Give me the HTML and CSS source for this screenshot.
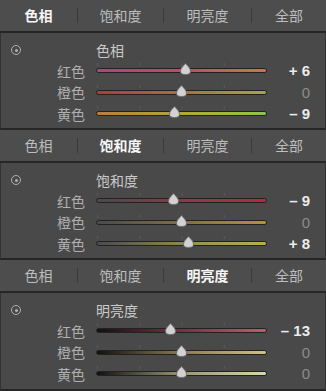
FILE: index.html
```html
<!DOCTYPE html>
<html lang="zh-CN">

<head>
    <meta charset="UTF-8">
    <meta name="viewport" content="width=device-width, initial-scale=1.0">
    <title>HSL</title>
    <link rel="stylesheet" href="styles.css">
</head>

<body>

    <!-- 色相 -->
    <div class="section">
        <div class="tabs">
            <span class="tab active">色相</span><i class="sep"></i>
            <span class="tab">饱和度</span><i class="sep"></i>
            <span class="tab">明亮度</span><i class="sep"></i>
            <span class="tab">全部</span>
        </div>
        <div class="panel">
            <div class="row head">
                <span class="dot"></span>
                <span class="title">色相</span>
            </div>
            <div class="row">
                <span class="label">红色</span>
                <div class="track hue-red"><span class="ticks"></span><svg class="thumb" style="left: 52.6%" width="11" height="12" viewBox="0 0 11 12"><path d="M5.5 0.5 C7 2.5 10.5 5 10.5 8 C10.5 10.5 9 11.5 5.5 11.5 C2 11.5 0.5 10.5 0.5 8 C0.5 5 4 2.5 5.5 0.5 Z" /></svg></div>
                <span class="value">+ 6</span>
            </div>
            <div class="row">
                <span class="label">橙色</span>
                <div class="track hue-orange"><span class="ticks"></span><svg class="thumb" style="left: 50%" width="11" height="12" viewBox="0 0 11 12"><path d="M5.5 0.5 C7 2.5 10.5 5 10.5 8 C10.5 10.5 9 11.5 5.5 11.5 C2 11.5 0.5 10.5 0.5 8 C0.5 5 4 2.5 5.5 0.5 Z" /></svg></div>
                <span class="value zero">0</span>
            </div>
            <div class="row">
                <span class="label">黄色</span>
                <div class="track hue-yellow"><span class="ticks"></span><svg class="thumb" style="left: 45.6%" width="11" height="12" viewBox="0 0 11 12"><path d="M5.5 0.5 C7 2.5 10.5 5 10.5 8 C10.5 10.5 9 11.5 5.5 11.5 C2 11.5 0.5 10.5 0.5 8 C0.5 5 4 2.5 5.5 0.5 Z" /></svg></div>
                <span class="value">– 9</span>
            </div>
        </div>
    </div>

    <!-- 饱和度 -->
    <div class="section">
        <div class="tabs">
            <span class="tab">色相</span><i class="sep"></i>
            <span class="tab active">饱和度</span><i class="sep"></i>
            <span class="tab">明亮度</span><i class="sep"></i>
            <span class="tab">全部</span>
        </div>
        <div class="panel">
            <div class="row head">
                <span class="dot"></span>
                <span class="title">饱和度</span>
            </div>
            <div class="row">
                <span class="label">红色</span>
                <div class="track sat-red"><span class="ticks"></span><svg class="thumb" style="left: 45%" width="11" height="12" viewBox="0 0 11 12"><path d="M5.5 0.5 C7 2.5 10.5 5 10.5 8 C10.5 10.5 9 11.5 5.5 11.5 C2 11.5 0.5 10.5 0.5 8 C0.5 5 4 2.5 5.5 0.5 Z" /></svg></div>
                <span class="value">– 9</span>
            </div>
            <div class="row">
                <span class="label">橙色</span>
                <div class="track sat-orange"><span class="ticks"></span><svg class="thumb" style="left: 50%" width="11" height="12" viewBox="0 0 11 12"><path d="M5.5 0.5 C7 2.5 10.5 5 10.5 8 C10.5 10.5 9 11.5 5.5 11.5 C2 11.5 0.5 10.5 0.5 8 C0.5 5 4 2.5 5.5 0.5 Z" /></svg></div>
                <span class="value zero">0</span>
            </div>
            <div class="row">
                <span class="label">黄色</span>
                <div class="track sat-yellow"><span class="ticks"></span><svg class="thumb" style="left: 54%" width="11" height="12" viewBox="0 0 11 12"><path d="M5.5 0.5 C7 2.5 10.5 5 10.5 8 C10.5 10.5 9 11.5 5.5 11.5 C2 11.5 0.5 10.5 0.5 8 C0.5 5 4 2.5 5.5 0.5 Z" /></svg></div>
                <span class="value">+ 8</span>
            </div>
        </div>
    </div>

    <!-- 明亮度 -->
    <div class="section">
        <div class="tabs">
            <span class="tab">色相</span><i class="sep"></i>
            <span class="tab">饱和度</span><i class="sep"></i>
            <span class="tab active">明亮度</span><i class="sep"></i>
            <span class="tab">全部</span>
        </div>
        <div class="panel">
            <div class="row head">
                <span class="dot"></span>
                <span class="title">明亮度</span>
            </div>
            <div class="row">
                <span class="label">红色</span>
                <div class="track lum-red"><span class="ticks"></span><svg class="thumb" style="left: 43.5%" width="11" height="12" viewBox="0 0 11 12"><path d="M5.5 0.5 C7 2.5 10.5 5 10.5 8 C10.5 10.5 9 11.5 5.5 11.5 C2 11.5 0.5 10.5 0.5 8 C0.5 5 4 2.5 5.5 0.5 Z" /></svg></div>
                <span class="value">– 13</span>
            </div>
            <div class="row">
                <span class="label">橙色</span>
                <div class="track lum-orange"><span class="ticks"></span><svg class="thumb" style="left: 50%" width="11" height="12" viewBox="0 0 11 12"><path d="M5.5 0.5 C7 2.5 10.5 5 10.5 8 C10.5 10.5 9 11.5 5.5 11.5 C2 11.5 0.5 10.5 0.5 8 C0.5 5 4 2.5 5.5 0.5 Z" /></svg></div>
                <span class="value zero">0</span>
            </div>
            <div class="row">
                <span class="label">黄色</span>
                <div class="track lum-yellow"><span class="ticks"></span><svg class="thumb" style="left: 50%" width="11" height="12" viewBox="0 0 11 12"><path d="M5.5 0.5 C7 2.5 10.5 5 10.5 8 C10.5 10.5 9 11.5 5.5 11.5 C2 11.5 0.5 10.5 0.5 8 C0.5 5 4 2.5 5.5 0.5 Z" /></svg></div>
                <span class="value zero">0</span>
            </div>
        </div>
    </div>

</body>

</html>
```

FILE: styles.css
```css
body {
    margin: 0;
    background-color: #4a4a4a;
    font-family: "Noto Sans CJK SC", "Noto Sans", sans-serif;
    font-size: 14px;
    color: #b4b4b4;
}

.section {
    height: 130px;
    display: flex;
    flex-direction: column;
}

.section:last-child {
    height: 131px;
}

.tabs {
    height: 31px;
    display: grid;
    grid-template-columns: 77px 1px 85px 1px 87px 1px 1fr;
    align-items: center;
    background-color: #4d4d4d;
    border-bottom: 2px solid #262626;
}

.tab {
    text-align: center;
    color: #bdbdbd;
    line-height: 20px;
    padding-bottom: 2px;
}

.tab.active {
    color: #f6f6f6;
    font-weight: bold;
}

.sep {
    height: 15px;
    background-color: #3a3a3a;
}

.panel {
    flex: 1;
    background-color: #494949;
    border-left: 1px solid #333;
    border-right: 1px solid #333;
    border-bottom: 2px solid #262626;
    padding-top: 7px;
}

.row {
    display: grid;
    grid-template-columns: 84px 171px 32px;
    column-gap: 11px;
    padding-right: 15px;
    align-items: center;
    height: 21.5px;
}

.row.head {
    height: 20px;
}

.dot {
    width: 8px;
    height: 8px;
    margin-left: 10px;
    border: 1.5px solid #b0b0b0;
    border-radius: 50%;
    position: relative;
}

.dot::after {
    content: "";
    position: absolute;
    left: 2.5px;
    top: 2.5px;
    width: 3px;
    height: 3px;
    border-radius: 50%;
    background-color: #b0b0b0;
}

.title {
    color: #cacaca;
}

.label {
    text-align: right;
    color: #b0b0b0;
    line-height: 18px;
}

.value {
    text-align: right;
    color: #ececec;
    font-family: "Liberation Sans", Arial, sans-serif;
    font-weight: bold;
    font-size: 15px;
    white-space: nowrap;
}

.value.zero {
    color: #8c8c8c;
    font-weight: normal;
}

.track {
    position: relative;
    height: 3px;
    border: 1px solid #222;
    border-radius: 3px;
}

.ticks {
    position: absolute;
    left: 0;
    right: 0;
    top: -6px;
    height: 3px;
    background-image: linear-gradient(90deg, #5a5a5a 1px, transparent 1px);
    background-size: 25% 3px;
    background-repeat: repeat-x;
}

.thumb {
    position: absolute;
    top: -6px;
    margin-left: -5.5px;
    fill: #d2d2d2;
    stroke: #707070;
    stroke-width: 1;
}

.hue-red { background: linear-gradient(90deg, #b8407c, #c24a62 50%, #c07a52); }
.hue-orange { background: linear-gradient(90deg, #a83c40, #a87040 50%, #a0a848); }
.hue-yellow { background: linear-gradient(90deg, #c07a40, #b0a838 50%, #90c448); }

.sat-red { background: linear-gradient(90deg, #4a4a4a, #8a3c48 60%, #b02c40); }
.sat-orange { background: linear-gradient(90deg, #4a4a4a, #8a7448 60%, #b49040); }
.sat-yellow { background: linear-gradient(90deg, #4a4a4a, #9a9450 60%, #b8b048); }

.lum-red { background: linear-gradient(90deg, #111, #7a3044 50%, #c45870); }
.lum-orange { background: linear-gradient(90deg, #111, #8a7a52 50%, #d0c08c); }
.lum-yellow { background: linear-gradient(90deg, #111, #9a9670 50%, #d8d8aa); }
```
